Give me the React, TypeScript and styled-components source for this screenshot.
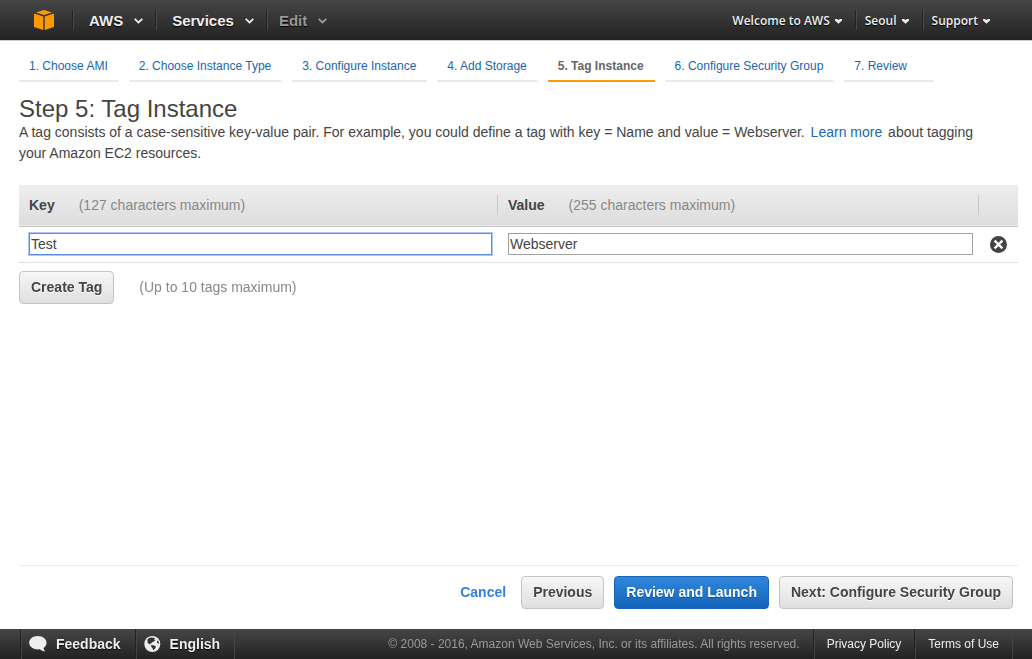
import React, { useState } from "react";
import styled, { createGlobalStyle, css } from "styled-components";

const GlobalStyle = createGlobalStyle`
  * { box-sizing: border-box; }
  body {
    margin: 0;
    background: #fff;
    color: #444;
    font: 14px/21px "Liberation Sans", Arial, sans-serif;
  }
  button, input { font: inherit; color: inherit; margin: 0; }
  a { text-decoration: none; }
`;

const Page = styled.div`
  min-height: 100vh;
  display: flex;
  flex-direction: column;
`;

const darkBar = css`
  display: flex;
  background: linear-gradient(#464646, #222);
  color: #eee;
`;

const TopBar = styled.header`
  ${darkBar}
  height: 41px;
  padding: 10px 29px 10px 32px;
  justify-content: space-between;
  border-bottom: 1px solid #ccc;
`;

const NavGroup = styled.nav`
  display: flex;
  height: 20px;
`;

const Logo = styled.a`
  display: flex;
  width: 40px;
  padding-left: 2px;
`;

const NavButton = styled.button<{ $muted?: boolean }>`
  display: flex;
  align-items: center;
  gap: 11px;
  padding: 2px 12px 0 ${(p) => (p.$muted ? "12px" : "16px")};
  border: 0;
  border-left: 1px solid #222;
  box-shadow: inset 1px 0 #4a4a4a;
  background: none;
  font-size: 15px;
  line-height: 18px;
  font-weight: 700;
  color: ${(p) => (p.$muted ? "#999" : "#eee")};
  text-shadow: 0 1px 1px #000;
`;

const AccountButton = styled(NavButton)`
  gap: 5px;
  padding: 2px 13px 0 9px;
  font: 600 12px/20px "Open Sans", "Noto Sans", sans-serif;
  &:first-child { border-left: 0; box-shadow: none; }
`;

const Content = styled.main`
  flex: 1;
  display: flex;
  flex-direction: column;
  padding: 9px 14px 20px 19px;
`;

const Steps = styled.nav`
  display: flex;
  gap: 10px;
`;

const Step = styled.a<{ $active?: boolean }>`
  min-width: 90px;
  height: 32px;
  padding: 0 11px 0 10px;
  border-bottom: 2px solid ${(p) => (p.$active ? "#f90" : "#eaeaea")};
  color: ${(p) => (p.$active ? "#666" : "#2166b0")};
  font-size: 12px;
  line-height: 32px;
  font-weight: ${(p) => (p.$active ? 700 : 400)};
  white-space: nowrap;
`;

const Title = styled.h1`
  margin: 13px 0 0;
  font-size: 24px;
  line-height: 27px;
  font-weight: 400;
`;

const Intro = styled.p`
  margin: 0 0 21px;
  padding-right: 20px;
  a { color: #2166b0; margin: 0 2px; }
`;

const TagTable = styled.table`
  width: 100%;
  border-collapse: collapse;
  table-layout: fixed;
`;

const HeadRow = styled.tr`
  height: 41px;
  background: linear-gradient(#eee, #ddd);
  border-bottom: 1px solid #c4c4c4;
`;

const HeadCell = styled.th<{ $width?: string }>`
  width: ${(p) => p.$width ?? "auto"};
  padding: 0;
  text-align: left;
`;

const HeadLabel = styled.div`
  display: flex;
  gap: 24px;
  height: 20px;
  line-height: 20px;
  padding-left: 10px;
  border-right: 1px solid #c8c8c8;
`;

const Hint = styled.span`
  font-weight: 400;
  color: #888;
`;

const BodyRow = styled.tr`
  height: 36px;
  border-bottom: 1px solid #ddd;
`;

const BodyCell = styled.td`
  padding: 0 6px 0 10px;
`;

const TextBox = styled.input`
  display: block;
  width: 100%;
  height: 22px;
  padding: 0 1px;
  border: 1px solid #a0a0a0;
  background: #fff;
  &:focus {
    border-color: #5b8ee0;
    outline: 1px solid #a9c6f5;
  }
`;

const RemoveButton = styled.button`
  display: flex;
  padding: 1px 1px 0;
  border: 0;
  background: none;
`;

const CreateRow = styled.div`
  display: flex;
  align-items: center;
  gap: 25px;
  margin-top: 8px;
`;

const Button = styled.button<{ $primary?: boolean }>`
  height: 33px;
  padding: 0 11px;
  border: 1px solid ${(p) => (p.$primary ? "#1664b5" : "#c4c4c4")};
  border-radius: 4px;
  background: ${(p) =>
    p.$primary ? "linear-gradient(#3186db, #1264ba)" : "linear-gradient(#f7f7f7, #dfdfdf)"};
  color: ${(p) => (p.$primary ? "#fff" : "#444")};
  text-shadow: 0 1px ${(p) => (p.$primary ? "#0f4f95" : "#fff")};
  font-weight: 700;
  white-space: nowrap;
`;

const Actions = styled.div`
  display: flex;
  justify-content: flex-end;
  align-items: center;
  gap: 10px;
  margin-top: auto;
  padding: 10px 5px 0 0;
  border-top: 1px solid #eaeaea;
`;

const Cancel = styled.a`
  margin-right: 5px;
  color: #3380dc;
  font-weight: 700;
`;

const Footer = styled.footer`
  ${darkBar}
  height: 30px;
  padding: 0 20px;
  align-items: stretch;
`;

const FooterButton = styled.button`
  display: flex;
  align-items: center;
  gap: 9px;
  padding: 0 14px 0 8px;
  border: 0;
  border-left: 1px solid #222;
  box-shadow: inset 1px 0 #444, 1px 0 #444;
  background: none;
  color: #eee;
  font-weight: 700;
  text-shadow: 0 1px 1px #000;
`;

const Copyright = styled.small`
  margin-left: auto;
  padding-right: 13px;
  font-size: 12px;
  line-height: 30px;
  color: #999;
`;

const FooterLink = styled.a`
  padding: 0 13px;
  border-left: 1px solid #222;
  box-shadow: inset 1px 0 #444, 1px 0 #444;
  font-size: 12px;
  line-height: 30px;
  color: #eee;
`;

const Cube = () => (
  <svg width="20" height="20" viewBox="0 0 20 20" fill="#f90" aria-label="AWS home">
    <path d="M10 0 18 2.4 10 4.9 2 2.4Z" />
    <path d="M0 3.6 9.3 6.4V20L0 17Z" />
    <path d="M20 3.6 10.7 6.4V20L20 17Z" />
  </svg>
);

const Chevron = () => (
  <svg width="9" height="6" viewBox="0 0 9 6" fill="none" stroke="currentColor" strokeWidth="1.8">
    <path d="M.7.8 4.5 4.400 8.300.8" />
  </svg>
);

const Caret = () => (
  <svg width="7" height="5" viewBox="0 0 7 5" fill="currentColor">
    <path d="M0 0H2L3.500 1 5 0H7V1.400L3.500 4.800 0 1.400Z" />
  </svg>
);

const Cross = () => (
  <svg width="17" height="17" viewBox="0 0 17 17">
    <circle cx="8.5" cy="8.5" r="8.5" fill="#444" />
    <path d="M4.6 4.6 12.4 12.4M12.4 4.6 4.6 12.4" stroke="#fff" strokeWidth="2.2" />
  </svg>
);

const Bubble = () => (
  <svg width="18" height="16" viewBox="0 0 18 16" fill="#eee">
    <path d="M8.8 0C13.8 0 17.5 2.8 17.5 6.8c0 2.3-1.2 4.1-2.9 5.2.1 1.5.8 2.6 1.7 3.5-2.1-.1-4-.9-5.3-2.2C4.9 14 .2 11.2.2 6.8.2 2.8 3.9 0 8.8 0Z" />
  </svg>
);

const Globe = () => (
  <svg width="17" height="16" viewBox="0 0 17 16">
    <circle cx="8.3" cy="8" r="8" fill="#eee" />
    <path
      fill="#333"
      d="M3.4 3.6 5.6 1.8 8 1.6 11.4 2.2 9.8 3.2 11.4 4 9.8 5.6 8.2 6.2 7.2 7.4 6 7.2 6.8 8.600 5 8 3.600 6.400Z
         M7.200 9 10.400 9.400 12 10.600 11 12.800 9.200 14.200 8.600 12.400 7.200 10.800Z
         M13.200 4.600 14.600 5.400 15.200 7.800 14 7.600 12.800 6.200Z"
    />
  </svg>
);

const steps = [
  "1. Choose AMI",
  "2. Choose Instance Type",
  "3. Configure Instance",
  "4. Add Storage",
  "5. Tag Instance",
  "6. Configure Security Group",
  "7. Review",
];

export default function App() {
  const [tagKey, setTagKey] = useState("Test");
  const [tagValue, setTagValue] = useState("Webserver");

  return (
    <Page>
      <GlobalStyle />
      <TopBar>
        <NavGroup>
          <Logo href="#"><Cube /></Logo>
          <NavButton>AWS <Chevron /></NavButton>
          <NavButton>Services <Chevron /></NavButton>
          <NavButton $muted>Edit <Chevron /></NavButton>
        </NavGroup>
        <NavGroup>
          <AccountButton>Welcome to AWS <Caret /></AccountButton>
          <AccountButton>Seoul <Caret /></AccountButton>
          <AccountButton>Support <Caret /></AccountButton>
        </NavGroup>
      </TopBar>

      <Content>
        <Steps>
          {steps.map((s, i) => (
            <Step key={s} href="#" $active={i === 4}>{s}</Step>
          ))}
        </Steps>
        <Title>Step 5: Tag Instance</Title>
        <Intro>
          A tag consists of a case-sensitive key-value pair. For example, you could define a tag
          with key = Name and value = Webserver. <a href="#">Learn more</a> about tagging your
          Amazon EC2 resources.
        </Intro>

        <TagTable>
          <thead>
            <HeadRow>
              <HeadCell $width="479px">
                <HeadLabel>Key <Hint>(127 characters maximum)</Hint></HeadLabel>
              </HeadCell>
              <HeadCell>
                <HeadLabel>Value <Hint>(255 characters maximum)</Hint></HeadLabel>
              </HeadCell>
              <HeadCell $width="39px" aria-label="Remove" />
            </HeadRow>
          </thead>
          <tbody>
            <BodyRow>
              <BodyCell>
                <TextBox
                  autoFocus
                  aria-label="Key"
                  value={tagKey}
                  onChange={(e) => setTagKey(e.target.value)}
                />
              </BodyCell>
              <BodyCell>
                <TextBox
                  aria-label="Value"
                  value={tagValue}
                  onChange={(e) => setTagValue(e.target.value)}
                />
              </BodyCell>
              <BodyCell>
                <RemoveButton aria-label="Remove tag"><Cross /></RemoveButton>
              </BodyCell>
            </BodyRow>
          </tbody>
        </TagTable>

        <CreateRow>
          <Button>Create Tag</Button>
          <Hint>(Up to 10 tags maximum)</Hint>
        </CreateRow>

        <Actions>
          <Cancel href="#">Cancel</Cancel>
          <Button>Previous</Button>
          <Button $primary>Review and Launch</Button>
          <Button>Next: Configure Security Group</Button>
        </Actions>
      </Content>

      <Footer>
        <FooterButton><Bubble />Feedback</FooterButton>
        <FooterButton><Globe />English</FooterButton>
        <Copyright>
          © 2008 - 2016, Amazon Web Services, Inc. or its affiliates. All rights reserved.
        </Copyright>
        <FooterLink href="#">Privacy Policy</FooterLink>
        <FooterLink href="#">Terms of Use</FooterLink>
      </Footer>
    </Page>
  );
}
